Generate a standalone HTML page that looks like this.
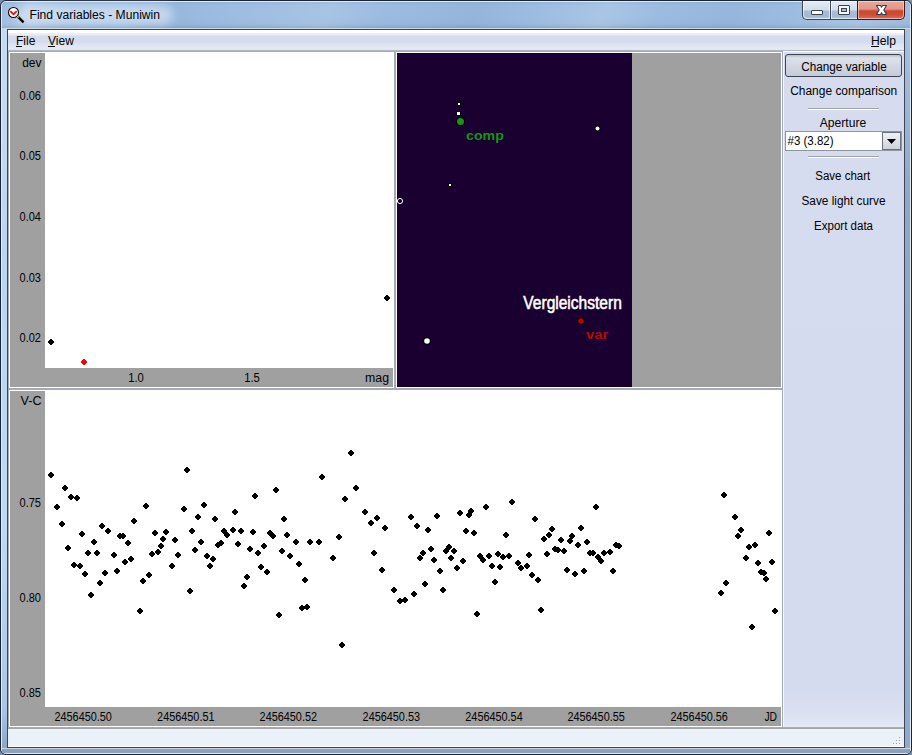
<!DOCTYPE html>
<html><head><meta charset="utf-8"><style>
*{margin:0;padding:0;box-sizing:border-box}
html,body{width:912px;height:755px;overflow:hidden;background:#7d8fa6}
body{position:relative;font-family:"Liberation Sans",sans-serif;font-size:12px;color:#000}
.a{position:absolute}
svg{position:absolute;left:0;top:0}
text{font-family:"Liberation Sans",sans-serif}
</style></head><body>
<!-- window frame -->
<div class="a" style="left:0;top:0;width:912px;height:755px;border:1px solid #1b2433;border-radius:6px 6px 6px 6px;background:#8aa2be"></div>
<div class="a" style="left:1px;top:1px;width:910px;height:753px;border:1px solid rgba(240,246,252,0.85);border-radius:5px 5px 5px 5px"></div>
<div class="a" style="left:2px;top:2px;width:908px;height:26px;border-radius:4px 4px 0 0;background:linear-gradient(180deg,#93b3d9 0,#9bbbe0 3px,#9cbce1 12px,#98b9de 22px,#8eaacb 25px,#8eaacb 26px)"></div>
<div class="a" style="left:2px;top:2px;width:908px;height:26px;border-radius:4px 4px 0 0;background:linear-gradient(115deg,rgba(255,255,255,0) 0,rgba(255,255,255,0.18) 3%,rgba(255,255,255,0) 8%,rgba(255,255,255,0) 14%,rgba(120,150,190,0.15) 18%,rgba(255,255,255,0) 24%,rgba(255,255,255,0.12) 36%,rgba(255,255,255,0) 42%,rgba(110,140,180,0.15) 52%,rgba(255,255,255,0) 58%,rgba(255,255,255,0.15) 66%,rgba(255,255,255,0) 72%,rgba(110,140,180,0.12) 80%,rgba(255,255,255,0) 86%,rgba(255,255,255,0.15) 94%,rgba(255,255,255,0) 100%)"></div>
<div class="a" style="left:2px;top:28px;width:908px;height:1px;background:#c9d6e6"></div>
<div class="a" style="left:2px;top:29px;width:5px;height:719px;background:linear-gradient(180deg,#c6dbf1 0,#c2d9f2 120px,#b8d5f3 220px,#bcd9f6 500px,#a9c6e8 680px,#8aa6c8 719px)"></div>
<div class="a" style="left:905px;top:29px;width:5px;height:719px;background:linear-gradient(180deg,#a9c1de 0,#8fa8c4 170px,#8ea6c2 400px,#97b0cc 560px,#90a9c6 719px)"></div>
<div class="a" style="left:2px;top:748px;width:908px;height:5px;background:linear-gradient(180deg,#c8d4e0 0,#c8d4e0 1px,#8aa2be 1px)"></div>
<div class="a" style="left:18px;top:5px;width:155px;height:20px;border-radius:10px;background:rgba(235,243,252,0.55);filter:blur(5px)"></div>
<!-- title icon -->
<svg style="left:6px;top:5px" width="20" height="20" viewBox="0 0 20 20">
 <circle cx="7.5" cy="7.5" r="5" fill="#fff" stroke="#000" stroke-width="1.05"/>
 <path d="M4.3 6.2 L7.5 9.3 L10.7 6.2" fill="none" stroke="#f00" stroke-width="1.8"/>
 <path d="M11.8 11.6 L17.6 17.4" stroke="#000" stroke-width="2.4"/>
 <path d="M11.3 11.2 L12.6 12.4" stroke="#ee0" stroke-width="1.4"/>
</svg>
<!-- caption buttons -->
<div class="a" style="left:802px;top:1px;width:29px;height:19px;border:1px solid #3e4656;border-top:none;border-right:none;border-radius:0 0 0 5px;background:linear-gradient(180deg,#e3ebf5 0,#d3deec 9px,#a9bdd6 10px,#a3b8d3 15px,#b6c8df 19px)"></div>
<div class="a" style="left:803px;top:1px;width:27px;height:18px;border:1px solid rgba(255,255,255,0.6);border-radius:0 0 0 4px"></div>
<div class="a" style="left:830px;top:1px;width:27px;height:19px;border:1px solid #3e4656;border-top:none;border-right:none;background:linear-gradient(180deg,#e3ebf5 0,#d3deec 9px,#a9bdd6 10px,#a3b8d3 15px,#b6c8df 19px)"></div>
<div class="a" style="left:831px;top:1px;width:26px;height:18px;border:1px solid rgba(255,255,255,0.6);border-right:none"></div>
<div class="a" style="left:857px;top:1px;width:48px;height:19px;border:1px solid #4a1410;border-top:none;border-radius:0 0 5px 0;background:linear-gradient(180deg,#e9a899 0,#e39787 8px,#c9452d 10px,#cf5039 14px,#dd7460 19px)"></div>
<div class="a" style="left:858px;top:1px;width:46px;height:18px;border:1px solid rgba(255,230,220,0.6);border-radius:0 0 4px 0"></div>
<div class="a" style="left:811px;top:10px;width:12px;height:5px;background:#fff;border:1px solid #3c4250;border-radius:1px"></div>
<div class="a" style="left:838px;top:5px;width:12px;height:10px;background:#f4f6f8;border:1px solid #3c4250;border-radius:1px"></div>
<div class="a" style="left:841px;top:8px;width:6px;height:4px;background:#a9bcd4;border:1px solid #3c4250"></div>
<svg width="912" height="755"><path d="M876.5 5.5 L880.5 5.5 L881.5 7.3 L882.5 5.5 L886.5 5.5 L883.8 10 L886.5 14.5 L882.5 14.5 L881.5 12.7 L880.5 14.5 L876.5 14.5 L879.2 10 Z" fill="#fff" stroke="#363e52" stroke-width="1.1" stroke-linejoin="round"/></svg>
<!-- client -->
<div class="a" style="left:7px;top:29px;width:898px;height:719px;border:1px solid #3d4656;background:#a6aab5"></div>
<!-- menubar -->
<div class="a" style="left:8px;top:30px;width:896px;height:21px;background:linear-gradient(180deg,#fff 0,#fff 3px,#eaf0f8 3px,#e6ebf5 5px,#d5dcee 6px,#d5dcee 12px,#dce3f1 14px,#e3e8f3 17px,#e3e8f3 20px,#b0b5c2 20px)"></div>
<div class="a" style="left:16px;top:46px;width:6px;height:1px;background:#000"></div>
<div class="a" style="left:48px;top:46px;width:7px;height:1px;background:#000"></div>
<div class="a" style="left:871px;top:46px;width:8px;height:1px;background:#000"></div>

<!-- top-left plot -->
<div class="a" style="left:9px;top:52px;width:385px;height:336px;background:#fff"></div>
<div class="a" style="left:10px;top:53px;width:383px;height:334px;background:#a0a0a0"></div>
<div class="a" style="left:45px;top:53px;width:349px;height:315px;background:#fff"></div>
<svg width="912" height="755">
<path d="M50 339h2v1h1v1h1v2h-1v1h-1v1h-2v-1h-1v-1h-1v-2h1v-1h1zM386 295h2v1h1v1h1v2h-1v1h-1v1h-2v-1h-1v-1h-1v-2h1v-1h1z" fill="#000" shape-rendering="crispEdges"/>
<path d="M83 359h2v1h1v1h1v2h-1v1h-1v1h-2v-1h-1v-1h-1v-2h1v-1h1z" fill="#f00" shape-rendering="crispEdges"/>
</svg>

<!-- star chart -->
<div class="a" style="left:396px;top:52px;width:386px;height:336px;background:#fff"></div>
<div class="a" style="left:397px;top:53px;width:384px;height:334px;background:#a0a0a0"></div>
<div class="a" style="left:397px;top:53px;width:235px;height:334px;background:#1a0030"></div>
<svg width="912" height="755">
 <rect x="457" y="102" width="4" height="4" rx="1" fill="#000"/><rect x="458" y="103" width="2" height="2" fill="#fff"/>
 <rect x="456" y="111" width="5" height="5" rx="1" fill="#000"/><rect x="457" y="112" width="3" height="3" fill="#fff"/>
 <circle cx="460.5" cy="121.5" r="4.6" fill="#000"/><circle cx="460.5" cy="121.5" r="3.5" fill="#119911"/>
 <circle cx="597.5" cy="128.5" r="3" fill="#000"/><circle cx="597.5" cy="128.5" r="2" fill="#fff"/>
 <rect x="448" y="183" width="4" height="4" rx="1" fill="#000"/><rect x="449" y="184" width="2" height="2" fill="#fff"/>
 <circle cx="400" cy="201" r="2.6" fill="none" stroke="#fff" stroke-width="1"/>
 <circle cx="427" cy="341" r="3.8" fill="#000"/><circle cx="427" cy="341" r="2.8" fill="#fff"/>
 <circle cx="581" cy="321" r="3.7" fill="#000"/><circle cx="581" cy="321" r="2.8" fill="#c00000"/>
</svg>

<!-- right panel -->
<div class="a" style="left:783px;top:51px;width:121px;height:676px;background:linear-gradient(180deg,#d6dcee 0,#d5dbee 640px,#dce2f1 664px,#e3e8f4 674px,#e9edf7 675px);border-left:1px solid #f4f6fb;border-top:1px solid #fff"></div>
<div class="a" style="left:785px;top:54px;width:117px;height:23px;border:1px solid #3c4350;border-radius:3px;background:linear-gradient(180deg,#b9bdc6 0,#dde1ea 3px,#d3d8e4 10px,#c5cbda 21px)"></div>
<div class="a" style="left:808px;top:108px;width:71px;height:2px;border-top:1px solid #9ea3ae;border-bottom:1px solid #fff"></div>
<div class="a" style="left:785px;top:131px;width:117px;height:20px;border:1px solid #8f949e;background:#fff"></div>
<div class="a" style="left:882px;top:132px;width:19px;height:18px;border:1px solid #6a707c;background:linear-gradient(180deg,#eef0f6 0,#dfe2ea 50%,#cdd1da 100%)"></div>
<svg width="912" height="755"><path d="M887 139h9l-4.5 5z" fill="#000"/></svg>
<div class="a" style="left:808px;top:156px;width:71px;height:2px;border-top:1px solid #9ea3ae;border-bottom:1px solid #fff"></div>

<!-- bottom plot -->
<div class="a" style="left:9px;top:390px;width:773px;height:337px;background:#fff"></div>
<div class="a" style="left:10px;top:391px;width:771px;height:335px;background:#a0a0a0"></div>
<div class="a" style="left:45px;top:391px;width:737px;height:316px;background:#fff"></div>
<svg width="912" height="755"><path d="M50 472h2v1h1v1h1v2h-1v1h-1v1h-2v-1h-1v-1h-1v-2h1v-1h1zM64 485h2v1h1v1h1v2h-1v1h-1v1h-2v-1h-1v-1h-1v-2h1v-1h1zM70 494h2v1h1v1h1v2h-1v1h-1v1h-2v-1h-1v-1h-1v-2h1v-1h1zM76 495h2v1h1v1h1v2h-1v1h-1v1h-2v-1h-1v-1h-1v-2h1v-1h1zM56 504h2v1h1v1h1v2h-1v1h-1v1h-2v-1h-1v-1h-1v-2h1v-1h1zM61 521h2v1h1v1h1v2h-1v1h-1v1h-2v-1h-1v-1h-1v-2h1v-1h1zM145 503h2v1h1v1h1v2h-1v1h-1v1h-2v-1h-1v-1h-1v-2h1v-1h1zM133 518h2v1h1v1h1v2h-1v1h-1v1h-2v-1h-1v-1h-1v-2h1v-1h1zM154 530h2v1h1v1h1v2h-1v1h-1v1h-2v-1h-1v-1h-1v-2h1v-1h1zM165 529h2v1h1v1h1v2h-1v1h-1v1h-2v-1h-1v-1h-1v-2h1v-1h1zM162 536h2v1h1v1h1v2h-1v1h-1v1h-2v-1h-1v-1h-1v-2h1v-1h1zM160 543h2v1h1v1h1v2h-1v1h-1v1h-2v-1h-1v-1h-1v-2h1v-1h1zM81 531h2v1h1v1h1v2h-1v1h-1v1h-2v-1h-1v-1h-1v-2h1v-1h1zM101 523h2v1h1v1h1v2h-1v1h-1v1h-2v-1h-1v-1h-1v-2h1v-1h1zM107 528h2v1h1v1h1v2h-1v1h-1v1h-2v-1h-1v-1h-1v-2h1v-1h1zM119 533h2v1h1v1h1v2h-1v1h-1v1h-2v-1h-1v-1h-1v-2h1v-1h1zM122 533h2v1h1v1h1v2h-1v1h-1v1h-2v-1h-1v-1h-1v-2h1v-1h1zM127 540h2v1h1v1h1v2h-1v1h-1v1h-2v-1h-1v-1h-1v-2h1v-1h1zM93 539h2v1h1v1h1v2h-1v1h-1v1h-2v-1h-1v-1h-1v-2h1v-1h1zM67 545h2v1h1v1h1v2h-1v1h-1v1h-2v-1h-1v-1h-1v-2h1v-1h1zM87 550h2v1h1v1h1v2h-1v1h-1v1h-2v-1h-1v-1h-1v-2h1v-1h1zM96 550h2v1h1v1h1v2h-1v1h-1v1h-2v-1h-1v-1h-1v-2h1v-1h1zM113 552h2v1h1v1h1v2h-1v1h-1v1h-2v-1h-1v-1h-1v-2h1v-1h1zM124 559h2v1h1v1h1v2h-1v1h-1v1h-2v-1h-1v-1h-1v-2h1v-1h1zM130 556h2v1h1v1h1v2h-1v1h-1v1h-2v-1h-1v-1h-1v-2h1v-1h1zM151 551h2v1h1v1h1v2h-1v1h-1v1h-2v-1h-1v-1h-1v-2h1v-1h1zM157 549h2v1h1v1h1v2h-1v1h-1v1h-2v-1h-1v-1h-1v-2h1v-1h1zM73 562h2v1h1v1h1v2h-1v1h-1v1h-2v-1h-1v-1h-1v-2h1v-1h1zM79 563h2v1h1v1h1v2h-1v1h-1v1h-2v-1h-1v-1h-1v-2h1v-1h1zM84 571h2v1h1v1h1v2h-1v1h-1v1h-2v-1h-1v-1h-1v-2h1v-1h1zM104 570h2v1h1v1h1v2h-1v1h-1v1h-2v-1h-1v-1h-1v-2h1v-1h1zM116 568h2v1h1v1h1v2h-1v1h-1v1h-2v-1h-1v-1h-1v-2h1v-1h1zM99 580h2v1h1v1h1v2h-1v1h-1v1h-2v-1h-1v-1h-1v-2h1v-1h1zM90 592h2v1h1v1h1v2h-1v1h-1v1h-2v-1h-1v-1h-1v-2h1v-1h1zM148 572h2v1h1v1h1v2h-1v1h-1v1h-2v-1h-1v-1h-1v-2h1v-1h1zM142 578h2v1h1v1h1v2h-1v1h-1v1h-2v-1h-1v-1h-1v-2h1v-1h1zM139 608h2v1h1v1h1v2h-1v1h-1v1h-2v-1h-1v-1h-1v-2h1v-1h1zM186 467h2v1h1v1h1v2h-1v1h-1v1h-2v-1h-1v-1h-1v-2h1v-1h1zM275 487h2v1h1v1h1v2h-1v1h-1v1h-2v-1h-1v-1h-1v-2h1v-1h1zM254 493h2v1h1v1h1v2h-1v1h-1v1h-2v-1h-1v-1h-1v-2h1v-1h1zM203 502h2v1h1v1h1v2h-1v1h-1v1h-2v-1h-1v-1h-1v-2h1v-1h1zM183 506h2v1h1v1h1v2h-1v1h-1v1h-2v-1h-1v-1h-1v-2h1v-1h1zM234 509h2v1h1v1h1v2h-1v1h-1v1h-2v-1h-1v-1h-1v-2h1v-1h1zM197 514h2v1h1v1h1v2h-1v1h-1v1h-2v-1h-1v-1h-1v-2h1v-1h1zM214 516h2v1h1v1h1v2h-1v1h-1v1h-2v-1h-1v-1h-1v-2h1v-1h1zM174 537h2v1h1v1h1v2h-1v1h-1v1h-2v-1h-1v-1h-1v-2h1v-1h1zM191 528h2v1h1v1h1v2h-1v1h-1v1h-2v-1h-1v-1h-1v-2h1v-1h1zM200 539h2v1h1v1h1v2h-1v1h-1v1h-2v-1h-1v-1h-1v-2h1v-1h1zM223 528h2v1h1v1h1v2h-1v1h-1v1h-2v-1h-1v-1h-1v-2h1v-1h1zM226 532h2v1h1v1h1v2h-1v1h-1v1h-2v-1h-1v-1h-1v-2h1v-1h1zM232 527h2v1h1v1h1v2h-1v1h-1v1h-2v-1h-1v-1h-1v-2h1v-1h1zM240 528h2v1h1v1h1v2h-1v1h-1v1h-2v-1h-1v-1h-1v-2h1v-1h1zM252 529h2v1h1v1h1v2h-1v1h-1v1h-2v-1h-1v-1h-1v-2h1v-1h1zM269 530h2v1h1v1h1v2h-1v1h-1v1h-2v-1h-1v-1h-1v-2h1v-1h1zM272 533h2v1h1v1h1v2h-1v1h-1v1h-2v-1h-1v-1h-1v-2h1v-1h1zM217 542h2v1h1v1h1v2h-1v1h-1v1h-2v-1h-1v-1h-1v-2h1v-1h1zM220 540h2v1h1v1h1v2h-1v1h-1v1h-2v-1h-1v-1h-1v-2h1v-1h1zM237 541h2v1h1v1h1v2h-1v1h-1v1h-2v-1h-1v-1h-1v-2h1v-1h1zM263 543h2v1h1v1h1v2h-1v1h-1v1h-2v-1h-1v-1h-1v-2h1v-1h1zM194 547h2v1h1v1h1v2h-1v1h-1v1h-2v-1h-1v-1h-1v-2h1v-1h1zM177 552h2v1h1v1h1v2h-1v1h-1v1h-2v-1h-1v-1h-1v-2h1v-1h1zM171 563h2v1h1v1h1v2h-1v1h-1v1h-2v-1h-1v-1h-1v-2h1v-1h1zM206 553h2v1h1v1h1v2h-1v1h-1v1h-2v-1h-1v-1h-1v-2h1v-1h1zM212 556h2v1h1v1h1v2h-1v1h-1v1h-2v-1h-1v-1h-1v-2h1v-1h1zM209 563h2v1h1v1h1v2h-1v1h-1v1h-2v-1h-1v-1h-1v-2h1v-1h1zM249 546h2v1h1v1h1v2h-1v1h-1v1h-2v-1h-1v-1h-1v-2h1v-1h1zM257 550h2v1h1v1h1v2h-1v1h-1v1h-2v-1h-1v-1h-1v-2h1v-1h1zM260 564h2v1h1v1h1v2h-1v1h-1v1h-2v-1h-1v-1h-1v-2h1v-1h1zM266 569h2v1h1v1h1v2h-1v1h-1v1h-2v-1h-1v-1h-1v-2h1v-1h1zM246 574h2v1h1v1h1v2h-1v1h-1v1h-2v-1h-1v-1h-1v-2h1v-1h1zM243 583h2v1h1v1h1v2h-1v1h-1v1h-2v-1h-1v-1h-1v-2h1v-1h1zM189 588h2v1h1v1h1v2h-1v1h-1v1h-2v-1h-1v-1h-1v-2h1v-1h1zM350 450h2v1h1v1h1v2h-1v1h-1v1h-2v-1h-1v-1h-1v-2h1v-1h1zM321 474h2v1h1v1h1v2h-1v1h-1v1h-2v-1h-1v-1h-1v-2h1v-1h1zM355 485h2v1h1v1h1v2h-1v1h-1v1h-2v-1h-1v-1h-1v-2h1v-1h1zM344 496h2v1h1v1h1v2h-1v1h-1v1h-2v-1h-1v-1h-1v-2h1v-1h1zM283 516h2v1h1v1h1v2h-1v1h-1v1h-2v-1h-1v-1h-1v-2h1v-1h1zM364 509h2v1h1v1h1v2h-1v1h-1v1h-2v-1h-1v-1h-1v-2h1v-1h1zM376 515h2v1h1v1h1v2h-1v1h-1v1h-2v-1h-1v-1h-1v-2h1v-1h1zM370 520h2v1h1v1h1v2h-1v1h-1v1h-2v-1h-1v-1h-1v-2h1v-1h1zM384 525h2v1h1v1h1v2h-1v1h-1v1h-2v-1h-1v-1h-1v-2h1v-1h1zM286 532h2v1h1v1h1v2h-1v1h-1v1h-2v-1h-1v-1h-1v-2h1v-1h1zM295 539h2v1h1v1h1v2h-1v1h-1v1h-2v-1h-1v-1h-1v-2h1v-1h1zM309 539h2v1h1v1h1v2h-1v1h-1v1h-2v-1h-1v-1h-1v-2h1v-1h1zM318 539h2v1h1v1h1v2h-1v1h-1v1h-2v-1h-1v-1h-1v-2h1v-1h1zM338 534h2v1h1v1h1v2h-1v1h-1v1h-2v-1h-1v-1h-1v-2h1v-1h1zM281 548h2v1h1v1h1v2h-1v1h-1v1h-2v-1h-1v-1h-1v-2h1v-1h1zM289 553h2v1h1v1h1v2h-1v1h-1v1h-2v-1h-1v-1h-1v-2h1v-1h1zM298 561h2v1h1v1h1v2h-1v1h-1v1h-2v-1h-1v-1h-1v-2h1v-1h1zM304 577h2v1h1v1h1v2h-1v1h-1v1h-2v-1h-1v-1h-1v-2h1v-1h1zM332 555h2v1h1v1h1v2h-1v1h-1v1h-2v-1h-1v-1h-1v-2h1v-1h1zM373 550h2v1h1v1h1v2h-1v1h-1v1h-2v-1h-1v-1h-1v-2h1v-1h1zM381 567h2v1h1v1h1v2h-1v1h-1v1h-2v-1h-1v-1h-1v-2h1v-1h1zM301 605h2v1h1v1h1v2h-1v1h-1v1h-2v-1h-1v-1h-1v-2h1v-1h1zM306 604h2v1h1v1h1v2h-1v1h-1v1h-2v-1h-1v-1h-1v-2h1v-1h1zM278 612h2v1h1v1h1v2h-1v1h-1v1h-2v-1h-1v-1h-1v-2h1v-1h1zM341 642h2v1h1v1h1v2h-1v1h-1v1h-2v-1h-1v-1h-1v-2h1v-1h1zM410 514h2v1h1v1h1v2h-1v1h-1v1h-2v-1h-1v-1h-1v-2h1v-1h1zM416 523h2v1h1v1h1v2h-1v1h-1v1h-2v-1h-1v-1h-1v-2h1v-1h1zM427 527h2v1h1v1h1v2h-1v1h-1v1h-2v-1h-1v-1h-1v-2h1v-1h1zM436 513h2v1h1v1h1v2h-1v1h-1v1h-2v-1h-1v-1h-1v-2h1v-1h1zM459 510h2v1h1v1h1v2h-1v1h-1v1h-2v-1h-1v-1h-1v-2h1v-1h1zM470 508h2v1h1v1h1v2h-1v1h-1v1h-2v-1h-1v-1h-1v-2h1v-1h1zM468 512h2v1h1v1h1v2h-1v1h-1v1h-2v-1h-1v-1h-1v-2h1v-1h1zM485 504h2v1h1v1h1v2h-1v1h-1v1h-2v-1h-1v-1h-1v-2h1v-1h1zM465 528h2v1h1v1h1v2h-1v1h-1v1h-2v-1h-1v-1h-1v-2h1v-1h1zM473 530h2v1h1v1h1v2h-1v1h-1v1h-2v-1h-1v-1h-1v-2h1v-1h1zM505 532h2v1h1v1h1v2h-1v1h-1v1h-2v-1h-1v-1h-1v-2h1v-1h1zM430 546h2v1h1v1h1v2h-1v1h-1v1h-2v-1h-1v-1h-1v-2h1v-1h1zM422 550h2v1h1v1h1v2h-1v1h-1v1h-2v-1h-1v-1h-1v-2h1v-1h1zM419 555h2v1h1v1h1v2h-1v1h-1v1h-2v-1h-1v-1h-1v-2h1v-1h1zM433 557h2v1h1v1h1v2h-1v1h-1v1h-2v-1h-1v-1h-1v-2h1v-1h1zM448 544h2v1h1v1h1v2h-1v1h-1v1h-2v-1h-1v-1h-1v-2h1v-1h1zM445 548h2v1h1v1h1v2h-1v1h-1v1h-2v-1h-1v-1h-1v-2h1v-1h1zM453 548h2v1h1v1h1v2h-1v1h-1v1h-2v-1h-1v-1h-1v-2h1v-1h1zM450 555h2v1h1v1h1v2h-1v1h-1v1h-2v-1h-1v-1h-1v-2h1v-1h1zM439 568h2v1h1v1h1v2h-1v1h-1v1h-2v-1h-1v-1h-1v-2h1v-1h1zM462 558h2v1h1v1h1v2h-1v1h-1v1h-2v-1h-1v-1h-1v-2h1v-1h1zM456 565h2v1h1v1h1v2h-1v1h-1v1h-2v-1h-1v-1h-1v-2h1v-1h1zM424 581h2v1h1v1h1v2h-1v1h-1v1h-2v-1h-1v-1h-1v-2h1v-1h1zM442 587h2v1h1v1h1v2h-1v1h-1v1h-2v-1h-1v-1h-1v-2h1v-1h1zM393 587h2v1h1v1h1v2h-1v1h-1v1h-2v-1h-1v-1h-1v-2h1v-1h1zM413 591h2v1h1v1h1v2h-1v1h-1v1h-2v-1h-1v-1h-1v-2h1v-1h1zM399 598h2v1h1v1h1v2h-1v1h-1v1h-2v-1h-1v-1h-1v-2h1v-1h1zM404 597h2v1h1v1h1v2h-1v1h-1v1h-2v-1h-1v-1h-1v-2h1v-1h1zM476 611h2v1h1v1h1v2h-1v1h-1v1h-2v-1h-1v-1h-1v-2h1v-1h1zM479 553h2v1h1v1h1v2h-1v1h-1v1h-2v-1h-1v-1h-1v-2h1v-1h1zM482 557h2v1h1v1h1v2h-1v1h-1v1h-2v-1h-1v-1h-1v-2h1v-1h1zM488 553h2v1h1v1h1v2h-1v1h-1v1h-2v-1h-1v-1h-1v-2h1v-1h1zM497 551h2v1h1v1h1v2h-1v1h-1v1h-2v-1h-1v-1h-1v-2h1v-1h1zM502 554h2v1h1v1h1v2h-1v1h-1v1h-2v-1h-1v-1h-1v-2h1v-1h1zM491 563h2v1h1v1h1v2h-1v1h-1v1h-2v-1h-1v-1h-1v-2h1v-1h1zM499 564h2v1h1v1h1v2h-1v1h-1v1h-2v-1h-1v-1h-1v-2h1v-1h1zM494 579h2v1h1v1h1v2h-1v1h-1v1h-2v-1h-1v-1h-1v-2h1v-1h1zM511 499h2v1h1v1h1v2h-1v1h-1v1h-2v-1h-1v-1h-1v-2h1v-1h1zM534 516h2v1h1v1h1v2h-1v1h-1v1h-2v-1h-1v-1h-1v-2h1v-1h1zM595 504h2v1h1v1h1v2h-1v1h-1v1h-2v-1h-1v-1h-1v-2h1v-1h1zM551 526h2v1h1v1h1v2h-1v1h-1v1h-2v-1h-1v-1h-1v-2h1v-1h1zM548 532h2v1h1v1h1v2h-1v1h-1v1h-2v-1h-1v-1h-1v-2h1v-1h1zM543 536h2v1h1v1h1v2h-1v1h-1v1h-2v-1h-1v-1h-1v-2h1v-1h1zM560 537h2v1h1v1h1v2h-1v1h-1v1h-2v-1h-1v-1h-1v-2h1v-1h1zM571 533h2v1h1v1h1v2h-1v1h-1v1h-2v-1h-1v-1h-1v-2h1v-1h1zM569 538h2v1h1v1h1v2h-1v1h-1v1h-2v-1h-1v-1h-1v-2h1v-1h1zM580 525h2v1h1v1h1v2h-1v1h-1v1h-2v-1h-1v-1h-1v-2h1v-1h1zM577 542h2v1h1v1h1v2h-1v1h-1v1h-2v-1h-1v-1h-1v-2h1v-1h1zM586 539h2v1h1v1h1v2h-1v1h-1v1h-2v-1h-1v-1h-1v-2h1v-1h1zM615 542h2v1h1v1h1v2h-1v1h-1v1h-2v-1h-1v-1h-1v-2h1v-1h1zM618 543h2v1h1v1h1v2h-1v1h-1v1h-2v-1h-1v-1h-1v-2h1v-1h1zM508 553h2v1h1v1h1v2h-1v1h-1v1h-2v-1h-1v-1h-1v-2h1v-1h1zM528 552h2v1h1v1h1v2h-1v1h-1v1h-2v-1h-1v-1h-1v-2h1v-1h1zM517 560h2v1h1v1h1v2h-1v1h-1v1h-2v-1h-1v-1h-1v-2h1v-1h1zM520 565h2v1h1v1h1v2h-1v1h-1v1h-2v-1h-1v-1h-1v-2h1v-1h1zM526 563h2v1h1v1h1v2h-1v1h-1v1h-2v-1h-1v-1h-1v-2h1v-1h1zM531 572h2v1h1v1h1v2h-1v1h-1v1h-2v-1h-1v-1h-1v-2h1v-1h1zM537 577h2v1h1v1h1v2h-1v1h-1v1h-2v-1h-1v-1h-1v-2h1v-1h1zM546 551h2v1h1v1h1v2h-1v1h-1v1h-2v-1h-1v-1h-1v-2h1v-1h1zM554 546h2v1h1v1h1v2h-1v1h-1v1h-2v-1h-1v-1h-1v-2h1v-1h1zM557 547h2v1h1v1h1v2h-1v1h-1v1h-2v-1h-1v-1h-1v-2h1v-1h1zM563 548h2v1h1v1h1v2h-1v1h-1v1h-2v-1h-1v-1h-1v-2h1v-1h1zM589 550h2v1h1v1h1v2h-1v1h-1v1h-2v-1h-1v-1h-1v-2h1v-1h1zM592 550h2v1h1v1h1v2h-1v1h-1v1h-2v-1h-1v-1h-1v-2h1v-1h1zM597 554h2v1h1v1h1v2h-1v1h-1v1h-2v-1h-1v-1h-1v-2h1v-1h1zM600 558h2v1h1v1h1v2h-1v1h-1v1h-2v-1h-1v-1h-1v-2h1v-1h1zM603 550h2v1h1v1h1v2h-1v1h-1v1h-2v-1h-1v-1h-1v-2h1v-1h1zM609 549h2v1h1v1h1v2h-1v1h-1v1h-2v-1h-1v-1h-1v-2h1v-1h1zM566 567h2v1h1v1h1v2h-1v1h-1v1h-2v-1h-1v-1h-1v-2h1v-1h1zM574 571h2v1h1v1h1v2h-1v1h-1v1h-2v-1h-1v-1h-1v-2h1v-1h1zM583 568h2v1h1v1h1v2h-1v1h-1v1h-2v-1h-1v-1h-1v-2h1v-1h1zM612 568h2v1h1v1h1v2h-1v1h-1v1h-2v-1h-1v-1h-1v-2h1v-1h1zM540 607h2v1h1v1h1v2h-1v1h-1v1h-2v-1h-1v-1h-1v-2h1v-1h1zM723 492h2v1h1v1h1v2h-1v1h-1v1h-2v-1h-1v-1h-1v-2h1v-1h1zM734 514h2v1h1v1h1v2h-1v1h-1v1h-2v-1h-1v-1h-1v-2h1v-1h1zM740 527h2v1h1v1h1v2h-1v1h-1v1h-2v-1h-1v-1h-1v-2h1v-1h1zM737 533h2v1h1v1h1v2h-1v1h-1v1h-2v-1h-1v-1h-1v-2h1v-1h1zM768 530h2v1h1v1h1v2h-1v1h-1v1h-2v-1h-1v-1h-1v-2h1v-1h1zM748 544h2v1h1v1h1v2h-1v1h-1v1h-2v-1h-1v-1h-1v-2h1v-1h1zM754 542h2v1h1v1h1v2h-1v1h-1v1h-2v-1h-1v-1h-1v-2h1v-1h1zM745 555h2v1h1v1h1v2h-1v1h-1v1h-2v-1h-1v-1h-1v-2h1v-1h1zM757 560h2v1h1v1h1v2h-1v1h-1v1h-2v-1h-1v-1h-1v-2h1v-1h1zM771 559h2v1h1v1h1v2h-1v1h-1v1h-2v-1h-1v-1h-1v-2h1v-1h1zM760 569h2v1h1v1h1v2h-1v1h-1v1h-2v-1h-1v-1h-1v-2h1v-1h1zM763 570h2v1h1v1h1v2h-1v1h-1v1h-2v-1h-1v-1h-1v-2h1v-1h1zM765 576h2v1h1v1h1v2h-1v1h-1v1h-2v-1h-1v-1h-1v-2h1v-1h1zM725 580h2v1h1v1h1v2h-1v1h-1v1h-2v-1h-1v-1h-1v-2h1v-1h1zM720 590h2v1h1v1h1v2h-1v1h-1v1h-2v-1h-1v-1h-1v-2h1v-1h1zM774 608h2v1h1v1h1v2h-1v1h-1v1h-2v-1h-1v-1h-1v-2h1v-1h1zM751 624h2v1h1v1h1v2h-1v1h-1v1h-2v-1h-1v-1h-1v-2h1v-1h1z" fill="#000" shape-rendering="crispEdges"/></svg>

<!-- status bar -->
<div class="a" style="left:8px;top:727px;width:896px;height:20px;background:linear-gradient(180deg,#a9abb0 0,#a9abb0 1px,#a2a3a6 1px,#a2a3a6 2px,#f2f6fb 2px,#f2f6fb 3px,#ebf1f9 3px,#ebf1f9 19px,#fff 19px)"></div>
<svg width="912" height="755"><g fill="#fff"><rect x="900" y="738" width="1" height="1"/><rect x="897" y="741" width="1" height="1"/><rect x="900" y="741" width="1" height="1"/><rect x="894" y="744" width="1" height="1"/><rect x="897" y="744" width="1" height="1"/><rect x="900" y="744" width="1" height="1"/></g><g fill="#9aa496"><rect x="899" y="737" width="1" height="1"/><rect x="896" y="740" width="1" height="1"/><rect x="899" y="740" width="1" height="1"/><rect x="893" y="743" width="1" height="1"/><rect x="896" y="743" width="1" height="1"/><rect x="899" y="743" width="1" height="1"/></g></svg>
<svg width="912" height="755">
<text x="29.5" y="19" text-anchor="start" font-size="12.5" font-weight="normal" fill="#000" textLength="130.5" lengthAdjust="spacingAndGlyphs" >Find variables - Muniwin</text>
<text x="16" y="45" text-anchor="start" font-size="12" font-weight="normal" fill="#000" >File</text>
<text x="48" y="45" text-anchor="start" font-size="12" font-weight="normal" fill="#000" >View</text>
<text x="871" y="45" text-anchor="start" font-size="12" font-weight="normal" fill="#000" textLength="25" lengthAdjust="spacingAndGlyphs" >Help</text>
<text x="41.5" y="67" text-anchor="end" font-size="12" font-weight="normal" fill="#000" textLength="19.3" lengthAdjust="spacingAndGlyphs" >dev</text>
<text x="41" y="100" text-anchor="end" font-size="12" font-weight="normal" fill="#000" textLength="21.5" lengthAdjust="spacingAndGlyphs" >0.06</text>
<text x="41" y="160" text-anchor="end" font-size="12" font-weight="normal" fill="#000" textLength="21.5" lengthAdjust="spacingAndGlyphs" >0.05</text>
<text x="41" y="221" text-anchor="end" font-size="12" font-weight="normal" fill="#000" textLength="21.5" lengthAdjust="spacingAndGlyphs" >0.04</text>
<text x="41" y="282" text-anchor="end" font-size="12" font-weight="normal" fill="#000" textLength="21.5" lengthAdjust="spacingAndGlyphs" >0.03</text>
<text x="41" y="342" text-anchor="end" font-size="12" font-weight="normal" fill="#000" textLength="21.5" lengthAdjust="spacingAndGlyphs" >0.02</text>
<text x="136" y="382" text-anchor="middle" font-size="12" font-weight="normal" fill="#000" textLength="15.6" lengthAdjust="spacingAndGlyphs" >1.0</text>
<text x="252" y="382" text-anchor="middle" font-size="12" font-weight="normal" fill="#000" textLength="15.6" lengthAdjust="spacingAndGlyphs" >1.5</text>
<text x="389" y="382" text-anchor="end" font-size="12" font-weight="normal" fill="#000" textLength="24" lengthAdjust="spacingAndGlyphs" >mag</text>
<text x="41.5" y="405" text-anchor="end" font-size="12" font-weight="normal" fill="#000" textLength="21" lengthAdjust="spacingAndGlyphs" >V-C</text>
<text x="41" y="507" text-anchor="end" font-size="12" font-weight="normal" fill="#000" textLength="21.5" lengthAdjust="spacingAndGlyphs" >0.75</text>
<text x="41" y="602" text-anchor="end" font-size="12" font-weight="normal" fill="#000" textLength="21.5" lengthAdjust="spacingAndGlyphs" >0.80</text>
<text x="41" y="697" text-anchor="end" font-size="12" font-weight="normal" fill="#000" textLength="21.5" lengthAdjust="spacingAndGlyphs" >0.85</text>
<text x="83.2" y="721" text-anchor="middle" font-size="12" font-weight="normal" fill="#000" textLength="57.4" lengthAdjust="spacingAndGlyphs" >2456450.50</text>
<text x="185.8" y="721" text-anchor="middle" font-size="12" font-weight="normal" fill="#000" textLength="57.4" lengthAdjust="spacingAndGlyphs" >2456450.51</text>
<text x="288.3" y="721" text-anchor="middle" font-size="12" font-weight="normal" fill="#000" textLength="57.4" lengthAdjust="spacingAndGlyphs" >2456450.52</text>
<text x="391.3" y="721" text-anchor="middle" font-size="12" font-weight="normal" fill="#000" textLength="57.4" lengthAdjust="spacingAndGlyphs" >2456450.53</text>
<text x="494.0" y="721" text-anchor="middle" font-size="12" font-weight="normal" fill="#000" textLength="57.4" lengthAdjust="spacingAndGlyphs" >2456450.54</text>
<text x="596.1" y="721" text-anchor="middle" font-size="12" font-weight="normal" fill="#000" textLength="57.4" lengthAdjust="spacingAndGlyphs" >2456450.55</text>
<text x="699.2" y="721" text-anchor="middle" font-size="12" font-weight="normal" fill="#000" textLength="57.4" lengthAdjust="spacingAndGlyphs" >2456450.56</text>
<text x="777" y="721" text-anchor="end" font-size="12" font-weight="normal" fill="#000" textLength="12.6" lengthAdjust="spacingAndGlyphs" >JD</text>
<text x="466" y="140" text-anchor="start" font-size="13.2" font-weight="bold" fill="#119611" textLength="37.8" lengthAdjust="spacingAndGlyphs" >comp</text>
<text x="586" y="339" text-anchor="start" font-size="13" font-weight="bold" fill="#b80808" textLength="22.4" lengthAdjust="spacingAndGlyphs" >var</text>
<text x="523.3" y="309" text-anchor="start" font-size="18" font-weight="normal" fill="#fff" textLength="98.5" lengthAdjust="spacingAndGlyphs" stroke="#fff" stroke-width="0.55">Vergleichstern</text>
<text x="844" y="71" text-anchor="middle" font-size="12" font-weight="normal" fill="#000" textLength="85.5" lengthAdjust="spacingAndGlyphs" >Change variable</text>
<text x="843.7" y="95" text-anchor="middle" font-size="12" font-weight="normal" fill="#000" textLength="107" lengthAdjust="spacingAndGlyphs" >Change comparison</text>
<text x="843" y="127" text-anchor="middle" font-size="12" font-weight="normal" fill="#000" textLength="46.5" lengthAdjust="spacingAndGlyphs" >Aperture</text>
<text x="787.5" y="145" text-anchor="start" font-size="12" font-weight="normal" fill="#000" textLength="46" lengthAdjust="spacingAndGlyphs" >#3 (3.82)</text>
<text x="842.8" y="180" text-anchor="middle" font-size="12" font-weight="normal" fill="#000" textLength="55" lengthAdjust="spacingAndGlyphs" >Save chart</text>
<text x="843.5" y="205" text-anchor="middle" font-size="12" font-weight="normal" fill="#000" textLength="84" lengthAdjust="spacingAndGlyphs" >Save light curve</text>
<text x="843.5" y="230" text-anchor="middle" font-size="12" font-weight="normal" fill="#000" textLength="59" lengthAdjust="spacingAndGlyphs" >Export data</text>
</svg>
</body></html>
